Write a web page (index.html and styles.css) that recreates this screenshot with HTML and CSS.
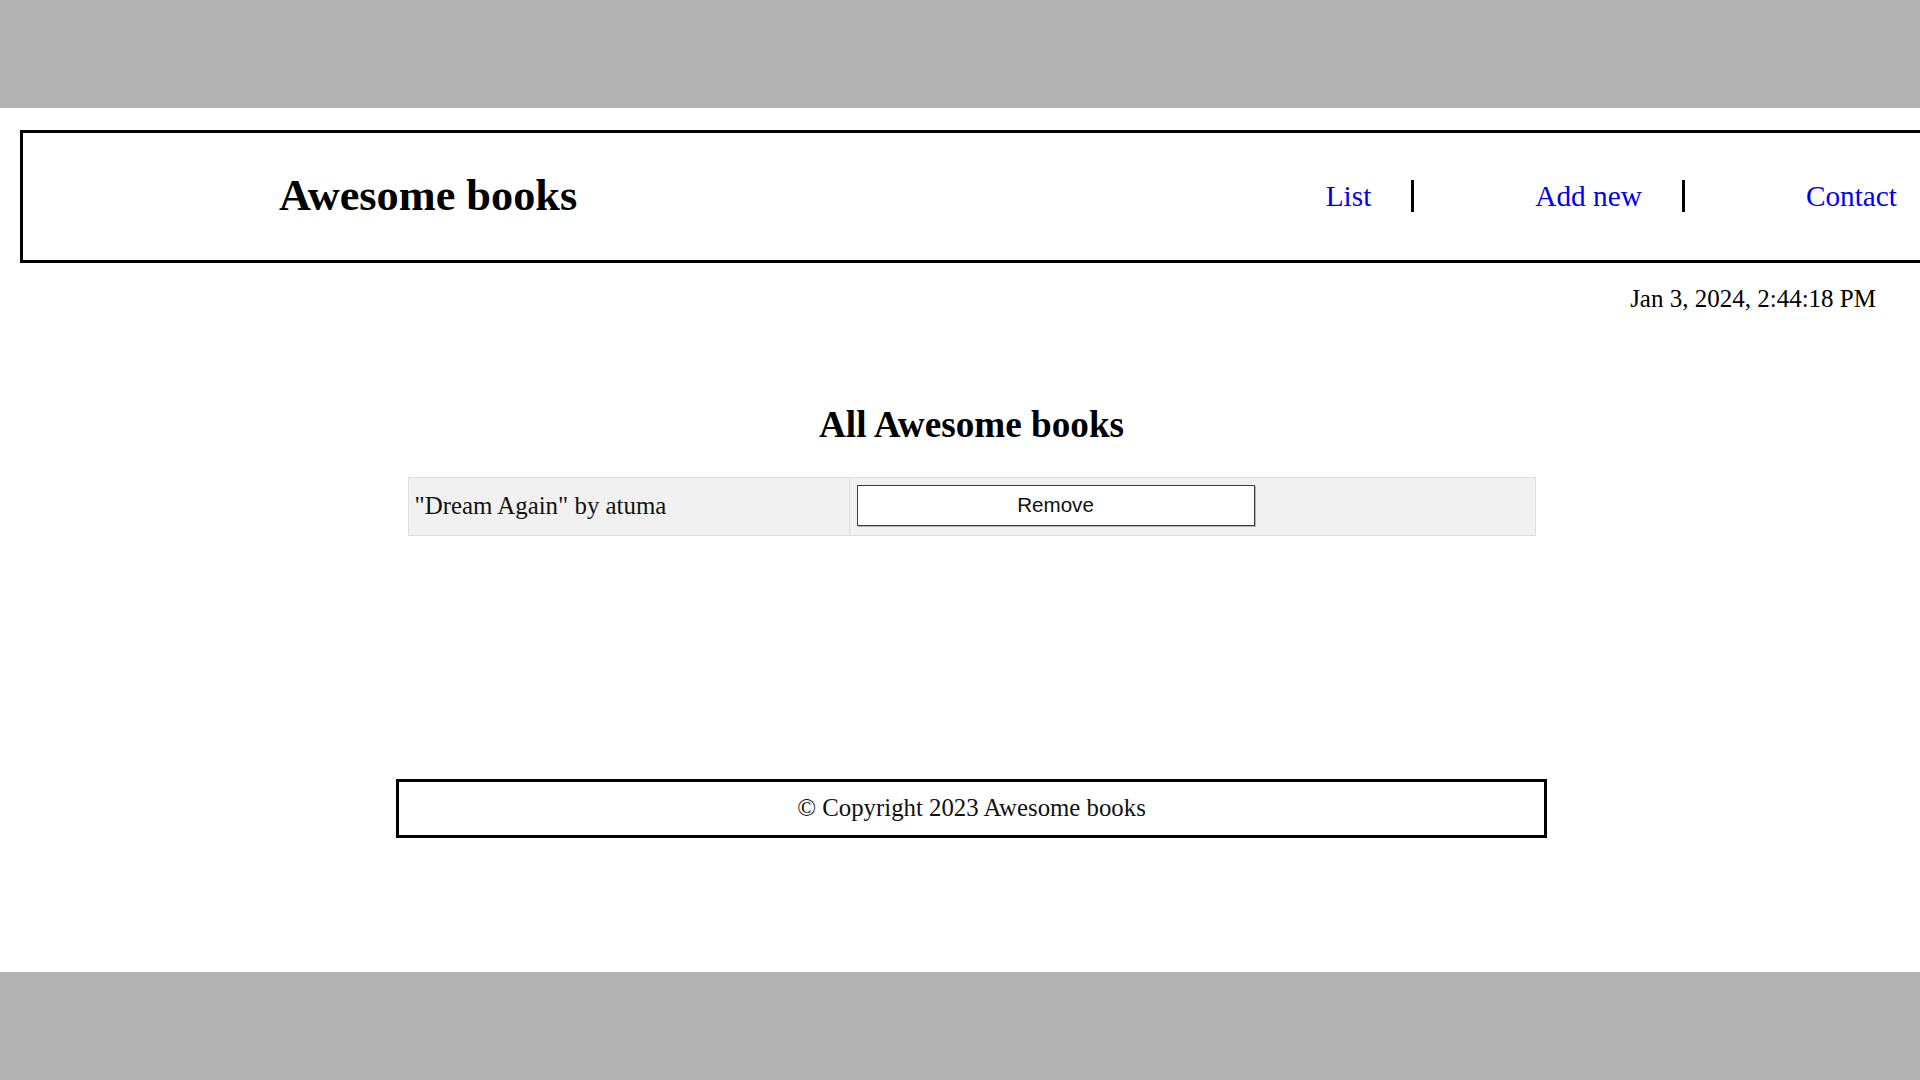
FILE: index.html
```html
<!DOCTYPE html>
<html lang="en">
<head>
<meta charset="utf-8">
<title>Awesome books</title>
<link rel="stylesheet" href="styles.css">
</head>
<body>
<div class="screen">
  <header class="site-header">
    <h1 class="brand">Awesome books</h1>
    <nav>
      <ul class="nav-list">
        <li class="nav-item"><a href="#list">List</a></li>
        <li class="nav-item"><a href="#add">Add new</a></li>
        <li class="nav-item"><a href="#contact">Contact</a></li>
      </ul>
    </nav>
  </header>
  <p class="date">Jan 3, 2024, 2:44:18 PM</p>
  <main class="content">
    <h2 class="section-title">All Awesome books</h2>
    <div class="book-row">
      <div class="book-title">"Dream Again" by atuma</div>
      <div class="book-action"><button class="remove-btn" type="button">Remove</button></div>
    </div>
    <footer class="site-footer">© Copyright 2023 Awesome books</footer>
  </main>
</div>
</body>
</html>
```
FILE: styles.css
```css
html, body {
  margin: 0;
  padding: 0;
  overflow: hidden;
}
body {
  background: #b3b3b3;
  font-family: "Liberation Serif", "Times New Roman", serif;
  color: #000;
}
.screen {
  margin-top: 108px;
  height: 864px;
  background: #fff;
  overflow: hidden;
  padding-top: 22px;
  box-sizing: border-box;
}
.site-header {
  margin-left: 20px;
  width: 1920px;
  height: 133px;
  box-sizing: border-box;
  border: 3px solid #000;
  padding-left: 256px;
  display: flex;
  align-items: center;
  justify-content: space-between;
}
.brand {
  margin: 0;
  font-size: 44.3px;
  font-weight: bold;
  line-height: 1.15;
}
.nav-list {
  list-style: none;
  margin: 0 0 1px;
  padding: 0;
  display: flex;
  gap: 81px;
}
.nav-item {
  padding: 0 40px;
  line-height: 32px;
  font-size: 29.3px;
  border-right: 3px solid #000;
}
.nav-item:last-child {
  border-right: none;
}
.nav-item a {
  color: #0000ee;
  text-decoration: none;
}
.date {
  margin: 22px 44px 0 0;
  text-align: right;
  font-size: 25px;
  line-height: 1.15;
}
.content {
  padding-left: 23px;
  display: flex;
  flex-direction: column;
  align-items: center;
}
.section-title {
  margin: 90px 0 30px;
  font-size: 37.2px;
  font-weight: bold;
  line-height: 1.15;
}
.book-row {
  width: 1128px;
  height: 59px;
  box-sizing: border-box;
  display: flex;
  background: #f1f1f1;
  border: 1px solid #dedede;
}
.book-title {
  width: 441px;
  box-sizing: border-box;
  border-right: 1px solid #dedede;
  padding: 0 6px;
  display: flex;
  align-items: center;
  font-size: 24.9px;
  color: #111;
}
.book-action {
  flex: 1;
  padding: 7px 7px 9px;
  display: flex;
  align-items: center;
}
.remove-btn {
  width: 398px;
  height: 41px;
  background: #fff;
  border: 1px solid #3c3c3c;
  box-shadow: 1px 1px 0 rgba(0,0,0,0.25);
  font-family: "Liberation Sans", Arial, sans-serif;
  font-size: 20.6px;
  color: #111;
  padding: 0;
}
.site-footer {
  margin-top: 243px;
  width: 1151px;
  height: 59px;
  box-sizing: border-box;
  border: 3px solid #000;
  display: flex;
  align-items: center;
  justify-content: center;
  font-size: 24.8px;
  color: #111;
}
```
